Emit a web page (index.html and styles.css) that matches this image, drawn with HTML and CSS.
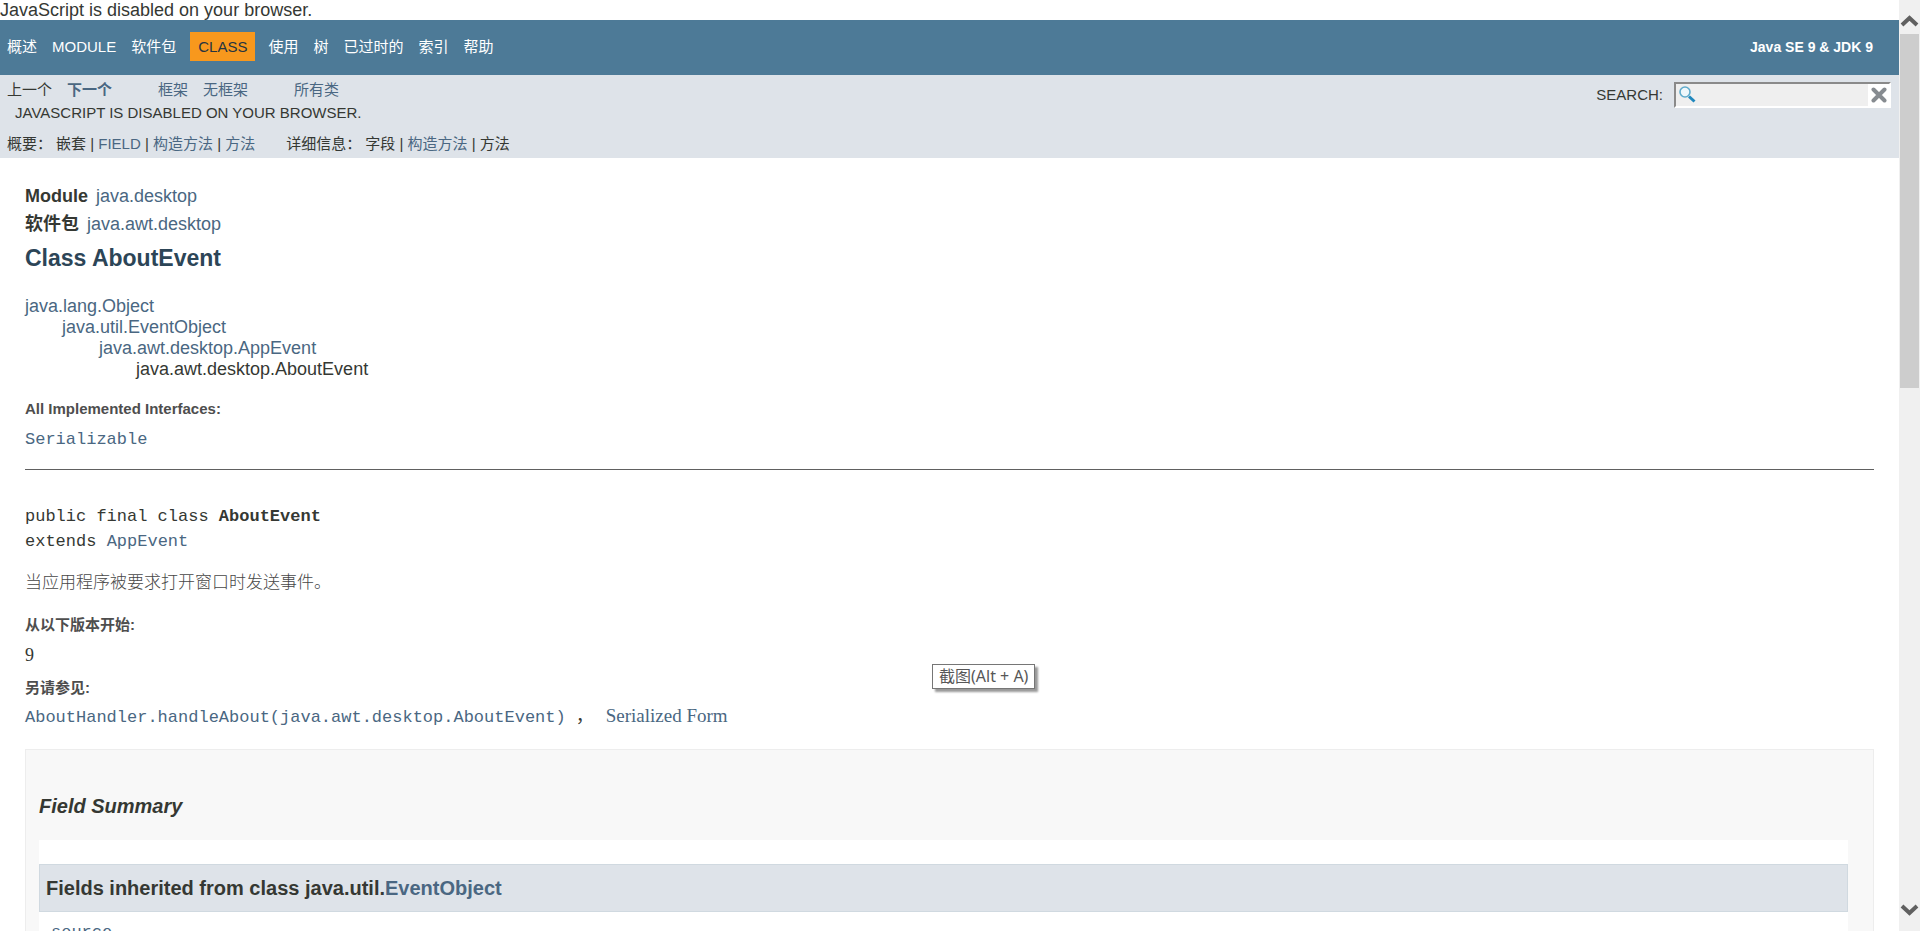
FILE: index.html
```html
<!DOCTYPE html>
<html lang="zh-CN">
<head>
<meta charset="utf-8">
<title>AboutEvent (Java SE 9 &amp; JDK 9)</title>
<link rel="stylesheet" href="styles.css">
</head>
<body>
<div class="viewport">
  <div class="page">
    <div class="no-script">JavaScript is disabled on your browser.</div>
    <header>
      <nav class="top-nav">
        <ul class="nav-list">
          <li><a href="#">概述</a></li>
          <li><a href="#">MODULE</a></li>
          <li><a href="#">软件包</a></li>
          <li class="current">CLASS</li>
          <li><a href="#">使用</a></li>
          <li><a href="#">树</a></li>
          <li><a href="#">已过时的</a></li>
          <li><a href="#">索引</a></li>
          <li><a href="#">帮助</a></li>
        </ul>
        <strong class="about">Java SE 9 &amp; JDK 9</strong>
      </nav>
      <div class="sub-nav">
        <div class="sub-left">
          <div class="sub-row">
            <ul class="nav-list"><li>上一个</li><li><a class="bold" href="#">下一个</a></li></ul>
            <ul class="nav-list"><li><a href="#">框架</a></li><li><a href="#">无框架</a></li></ul>
            <ul class="nav-list"><li><a href="#">所有类</a></li></ul>
          </div>
          <div class="no-script-upper">JAVASCRIPT IS DISABLED ON YOUR BROWSER.</div>
          <div class="summary-row">
            <div class="summary"><span>概要：</span><span>嵌套 | <a href="#">FIELD</a> | <a href="#">构造方法</a> | <a href="#">方法</a></span></div>
            <div class="summary"><span>详细信息：</span><span>字段 | <a href="#">构造方法</a> | 方法</span></div>
          </div>
        </div>
        <form class="search">
          <label for="search">SEARCH:</label>
          <div class="search-box">
            <svg class="lens" viewBox="0 0 18 18" width="18" height="18" aria-hidden="true">
              <circle cx="7" cy="6" r="5" fill="#eef7fb" stroke="#5fabcc" stroke-width="1.6"/>
              <path d="M11 10.500L16.500 15.500" stroke="#1f87bd" stroke-width="3"/>
            </svg>
            <input id="search" type="text">
            <button type="reset" aria-label="Clear">
              <svg viewBox="0 0 16 16" width="16" height="16" aria-hidden="true">
                <path d="M2.500 2.500L13.500 13.500M13.500 2.500L2.500 13.500" stroke="#868b90" stroke-width="4" stroke-linecap="round"/>
              </svg>
            </button>
          </div>
        </form>
      </div>
    </header>
    <main>
      <div class="sub-title"><b>Module</b><a href="#">java.desktop</a></div>
      <div class="sub-title"><b>软件包</b><a href="#">java.awt.desktop</a></div>
      <h2>Class AboutEvent</h2>
      <ul class="inheritance">
        <li><a href="#">java.lang.Object</a>
          <ul><li><a href="#">java.util.EventObject</a>
            <ul><li><a href="#">java.awt.desktop.AppEvent</a>
              <ul><li>java.awt.desktop.AboutEvent</li></ul>
            </li></ul>
          </li></ul>
        </li>
      </ul>
      <dl class="interfaces">
        <dt>All Implemented Interfaces:</dt>
        <dd><a class="code" href="#">Serializable</a></dd>
      </dl>
      <hr>
      <pre>public final class <b>AboutEvent</b>
extends <a href="#">AppEvent</a></pre>
      <p class="description">当应用程序被要求打开窗口时发送事件。</p>
      <dl class="notes">
        <dt>从以下版本开始:</dt>
        <dd>9</dd>
        <dt>另请参见:</dt>
        <dd><a class="code" href="#">AboutHandler.handleAbout(java.awt.desktop.AboutEvent)</a><span class="comma">，</span><a href="#">Serialized Form</a></dd>
      </dl>
      <section class="field-summary">
        <h3>Field Summary</h3>
        <div class="inherited">
          <h4>Fields inherited from class java.util.<a href="#">EventObject</a></h4>
          <a class="code" href="#">source</a>
        </div>
      </section>
    </main>
  </div>
  <div class="scrollbar" aria-hidden="true">
    <svg viewBox="0 0 19 14" width="19" height="14"><path d="M2 11L9.500 4L17 11" fill="none" stroke="#606060" stroke-width="4"/></svg>
    <div class="track"><div class="thumb"></div></div>
    <svg viewBox="0 0 19 14" width="19" height="14"><path d="M2 3L9.500 10L17 3" fill="none" stroke="#606060" stroke-width="4"/></svg>
  </div>
  <div class="tooltip" role="tooltip">截图(Alt + A)</div>
</div>
</body>
</html>
```

FILE: styles.css
```css
* { box-sizing: border-box; }
body {
  margin: 0;
  color: #353833;
  background: #fff;
  font: 18px/20px "Liberation Sans", "Noto Sans CJK SC", sans-serif;
}
a { color: #4a6782; text-decoration: none; }
ul, dl, dd { margin: 0; padding: 0; list-style: none; }

.viewport { display: flex; height: 100vh; overflow: hidden; position: relative; }
.page { flex: 1; min-width: 0; overflow: hidden; }

.no-script { height: 20px; }

.top-nav {
  display: flex;
  justify-content: space-between;
  align-items: center;
  height: 55px;
  padding: 0 26px 2px 7px;
  background: #4d7a97;
  color: #fff;
  font-size: 15px;
}
.nav-list { display: flex; align-items: center; gap: 15px; }
.top-nav a { color: #fff; }
.current { padding: 5px 8px 4px; margin: 0 -2px 0 -1px; background: #f8981d; color: #253441; }
.about { font-size: 14px; }

.sub-nav {
  display: flex;
  justify-content: space-between;
  height: 83px;
  padding: 0 8px 0 7px;
  background: #dee3e9;
  font-size: 15px;
}
.sub-row { display: flex; gap: 46px; padding-top: 5px; }
.bold { font-weight: bold; }
.no-script-upper { padding: 3px 8px 0; }
.summary-row { display: flex; gap: 31px; padding-top: 11px; }
.summary { display: flex; gap: 4px; }

.search { display: flex; align-items: flex-start; gap: 11px; padding-top: 7px; }
.search label { line-height: 26px; }
.search-box {
  display: flex;
  align-items: center;
  width: 217px;
  height: 26px;
  border: 2px solid;
  border-color: #8a8a8a #fff #fff #8a8a8a;
  background: #efefef;
}
.lens { flex: none; margin-left: 2px; }
.search-box input {
  flex: 1;
  min-width: 0;
  border: 0;
  outline: 0;
  background: transparent;
  font: inherit;
}
.search-box button {
  display: flex;
  justify-content: center;
  align-items: center;
  width: 21px;
  height: 22px;
  padding: 0;
  border: 0;
  background: #fff;
}

main { padding: 24px 25px 0 25px; }
.sub-title { display: flex; gap: 8px; line-height: 28px; }
h2 { margin: 6px 0 24px; color: #2c4557; font-size: 23px; line-height: 28px; }
.inheritance { line-height: 21px; }
.inheritance ul { margin-left: 37px; }

dl { font-family: "Liberation Serif", "Noto Sans CJK SC", serif; }
dt {
  color: #4e4e4e;
  font: bold 15px/20px "Liberation Sans", "Noto Sans CJK SC", sans-serif;
}
.code, pre { font-family: "Liberation Mono", "Noto Sans CJK SC", monospace; font-size: 17px; }
.interfaces { margin-top: 19px; }
.interfaces dd { padding-top: 9px; }
hr { margin: 19px 0 0; border: 0; border-top: 1px solid #606060; }
pre { margin: 34px 0 0; line-height: 25px; }
.description {
  margin: 19px 0 0;
  color: #474747;
  font-size: 17px;
  font-weight: 300;
  line-height: 20px;
}
.notes { margin-top: 22px; }
.notes dd { padding: 10px 0 13px; }
.notes dd:last-child { padding: 8px 0 0; }
.comma { display: inline-block; width: 40px; padding-left: 10px; }
.notes a:last-child { font-size: 19px; }

.field-summary {
  margin-top: 21px;
  padding: 44px 25px 0 13px;
  border: 1px solid #ededed;
  background: #f8f8f8;
}
h3 { margin: 0 0 22px; font-size: 20px; font-style: italic; line-height: 24px; }
.inherited { height: 200px; padding-top: 24px; background: #fff; }
h4 {
  margin: 0 0 9px;
  padding: 11px 6px 11px;
  border: 1px solid #d0d9e0;
  background: #dee3e9;
  font-size: 20px;
  line-height: 24px;
}
.inherited .code { margin-left: 12px; }

.scrollbar {
  display: flex;
  flex-direction: column;
  width: 21px;
  padding: 14px 1px;
  background: #f0f0f0;
}
.track { flex: 1; padding: 6px 0; }
.thumb { height: 41%; background: #cdcdcd; }

.tooltip {
  position: absolute;
  left: 932px;
  top: 664px;
  padding: 0 6px 1px;
  border: 1px solid #767676;
  background: #fff;
  box-shadow: 3px 3px 2px #999;
  color: #575757;
  font: 16px/22px "Noto Sans", "Noto Sans CJK SC", sans-serif;
}
```
